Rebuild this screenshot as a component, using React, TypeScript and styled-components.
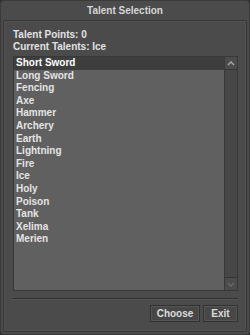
import * as React from "react";
import styled, { createGlobalStyle } from "styled-components";

const GlobalStyle = createGlobalStyle`
  html, body {
    margin: 0;
    padding: 0;
    background: #2f2f2f;
  }
  body {
    font-family: "Liberation Sans", Arial, sans-serif;
  }
`;

const Window = styled.div`
  width: 250px;
  height: 335px;
  box-sizing: border-box;
  background: #4b4b4b;
  border: 1px solid #3a3a3a;
  border-radius: 4px;
  display: flex;
  flex-direction: column;
`;

const TitleBar = styled.div`
  height: 19px;
  display: flex;
  align-items: center;
  justify-content: center;
  color: #d6d6d6;
  font-size: 10px;
  font-weight: bold;
`;

const Panel = styled.div`
  flex: 1;
  margin: 0 2px 2px 2px;
  border: 1px solid #363636;
  box-shadow: inset 0 0 0 1px #525252;
  border-radius: 2px;
  padding: 8px 8px 8px 9px;
  display: flex;
  flex-direction: column;
`;

const InfoLine = styled.div`
  color: #e2e2e2;
  font-size: 10px;
  font-weight: bold;
  line-height: 12px;
`;

const ListBox = styled.div`
  margin-top: 3px;
  height: 235px;
  box-sizing: border-box;
  border: 1px solid #383838;
  background: #606060;
  display: flex;
`;

const Items = styled.div`
  flex: 1;
  display: flex;
  flex-direction: column;
`;

const Item = styled.div<{ $selected?: boolean }>`
  height: 12.6px;
  line-height: 12.6px;
  padding-left: 2px;
  font-size: 10px;
  font-weight: bold;
  color: ${p => (p.$selected ? "#ffffff" : "#e4e4e4")};
  background: ${p => (p.$selected ? "#3e3e3e" : "transparent")};
`;

const ScrollBar = styled.div`
  width: 12px;
  border-left: 1px solid #393939;
  background: #474747;
  display: flex;
  flex-direction: column;
  justify-content: space-between;
`;

const ScrollButton = styled.div<{ $down?: boolean }>`
  height: 12px;
  background: #4c4c4c;
  border-top: ${p => (p.$down ? "1px solid #353535" : "none")};
  border-bottom: ${p => (p.$down ? "none" : "1px solid #353535")};
  display: flex;
  align-items: center;
  justify-content: center;
`;

const Separator = styled.div`
  margin-top: 7px;
  height: 1px;
  background: #2f2f2f;
  border-bottom: 1px solid #575757;
`;

const ButtonRow = styled.div`
  margin-top: 5px;
  display: flex;
  justify-content: flex-end;
  gap: 3px;
`;

const Button = styled.div<{ $w: number }>`
  width: ${p => p.$w}px;
  height: 17px;
  box-sizing: border-box;
  border: 1px solid #313131;
  box-shadow: inset 0 0 0 1px #565656;
  background: #474747;
  color: #dcdcdc;
  font-size: 10px;
  font-weight: bold;
  display: flex;
  align-items: center;
  justify-content: center;
`;

const talents = [
  "Short Sword",
  "Long Sword",
  "Fencing",
  "Axe",
  "Hammer",
  "Archery",
  "Earth",
  "Lightning",
  "Fire",
  "Ice",
  "Holy",
  "Poison",
  "Tank",
  "Xelima",
  "Merien",
];

const Caret = ({ down, color }: { down?: boolean; color: string }) => (
  <svg width="8" height="5" viewBox="0 0 8 5">
    <path
      d={down ? "M1 1 L4 4 L7 1" : "M1 4 L4 1 L7 4"}
      fill="none"
      stroke={color}
      strokeWidth="1.3"
    />
  </svg>
);

export default function App() {
  return (
    <>
      <GlobalStyle />
      <Window>
        <TitleBar>Talent Selection</TitleBar>
        <Panel>
          <InfoLine>Talent Points: 0</InfoLine>
          <InfoLine>Current Talents: Ice</InfoLine>
          <ListBox>
            <Items>
              {talents.map((t, i) => (
                <Item key={t} $selected={i === 0}>
                  {t}
                </Item>
              ))}
            </Items>
            <ScrollBar>
              <ScrollButton>
                <Caret color="#a8a8a8" />
              </ScrollButton>
              <ScrollButton $down>
                <Caret down color="#6a6a6a" />
              </ScrollButton>
            </ScrollBar>
          </ListBox>
          <Separator />
          <ButtonRow>
            <Button $w={50}>Choose</Button>
            <Button $w={35}>Exit</Button>
          </ButtonRow>
        </Panel>
      </Window>
    </>
  );
}
